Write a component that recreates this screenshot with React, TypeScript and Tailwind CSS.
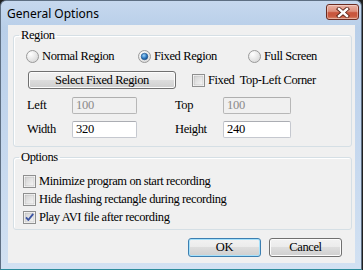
import React from "react";

const serif = { fontFamily: '"Liberation Serif", "Times New Roman", serif' };

function Radio({ checked }: { checked?: boolean }) {
  return (
    <svg width="13" height="13" viewBox="0 0 13 13" className="shrink-0">
      <defs>
        <radialGradient id={checked ? "rg1" : "rg0"} cx="0.35" cy="0.3" r="0.8">
          <stop offset="0" stopColor="#ffffff" />
          <stop offset="1" stopColor="#d6d6d6" />
        </radialGradient>
        <radialGradient id="dot" cx="0.4" cy="0.35" r="0.7">
          <stop offset="0" stopColor="#9fd4f8" />
          <stop offset="0.6" stopColor="#2b77c0" />
          <stop offset="1" stopColor="#14457c" />
        </radialGradient>
      </defs>
      <circle cx="6.5" cy="6.5" r="6" fill={`url(#${checked ? "rg1" : "rg0"})`} stroke="#9a9a9a" strokeWidth="1" />
      {checked && <circle cx="6.5" cy="6.5" r="3.3" fill="url(#dot)" stroke="#1c4f86" strokeWidth="0.6" />}
    </svg>
  );
}

function Check({ checked }: { checked?: boolean }) {
  return (
    <svg width="13" height="13" viewBox="0 0 13 13" className="shrink-0">
      <defs>
        <linearGradient id="cbg" x1="0" y1="0" x2="1" y2="1">
          <stop offset="0" stopColor="#d2d2d2" />
          <stop offset="1" stopColor="#f6f6f6" />
        </linearGradient>
      </defs>
      <rect x="0.5" y="0.5" width="12" height="12" fill="#ffffff" stroke="#8e8f8f" />
      <rect x="2" y="2" width="9" height="9" fill="url(#cbg)" stroke="#b0b0b0" strokeWidth="0.5" />
      {checked && (
        <path d="M3 6.3 L5.3 9 L10.2 2.8" fill="none" stroke="#3c55a3" strokeWidth="1.9" strokeLinejoin="round" />
      )}
    </svg>
  );
}

function Btn({ children, w, def }: { children: React.ReactNode; w: string; def?: boolean }) {
  return (
    <div
      className={`${w} h-full rounded-[3px] border ${def ? "border-[#3c7fb1] shadow-[inset_0_0_0_1px_#a6e1fb]" : "border-[#707070] shadow-[inset_0_0_0_1px_#fcfcfc]"} bg-[linear-gradient(to_bottom,#f2f2f2_0%,#ebebeb_50%,#dddddd_50%,#cfcfcf_100%)] flex items-center justify-center text-[12.5px] leading-none text-black tracking-[-0.4px]`}
      style={serif}
    >
      {children}
    </div>
  );
}

function Field({ value, disabled, w }: { value: string; disabled?: boolean; w: string }) {
  return (
    <div
      className={`${w} h-full rounded-[2px] border ${disabled ? "bg-[#f0f0f0] text-[#8a8a8a] border-[#b7b7b7] border-t-[#afafaf]" : "bg-white text-black border-[#c5c8cf] border-t-[#abadb3]"} pl-[3px] flex items-center text-[12.5px] leading-none tracking-[-0.2px]`}
      style={serif}
    >
      {value}
    </div>
  );
}

export default function App() {
  return (
    <div className="w-[363px] h-[270px] bg-[#202020] overflow-hidden">
      <div className="w-[362px] h-[270px] rounded-t-[6px] border border-[#5e6f83] border-b-[#2b8c9c] bg-[linear-gradient(to_bottom,#c6d8ee_0%,#b9cfe9_10%,#c4d7ee_50%,#d2e1f2_100%)] flex flex-col">
        <div className="h-[24px] flex items-start justify-between pl-[6px] pr-[2px] shrink-0">
          <span
            className="mt-[5px] text-[12px] leading-[15px] text-black"
            style={{ fontFamily: '"Noto Sans", "Open Sans", sans-serif' }}
          >
            General Options
          </span>
          <div className="mt-[3px] w-[33px] h-[16px] rounded-[3px] border border-[#6b2b20] bg-[linear-gradient(to_bottom,#eab2a4_0%,#dd8f7c_45%,#c8553d_55%,#c9593f_80%,#dc8a6f_100%)] flex items-center justify-center shadow-[inset_0_0_0_1px_rgba(255,255,255,0.35)]">
            <svg width="14" height="11" viewBox="0 0 14 11">
              <path d="M3 2 L11 9 M11 2 L3 9" stroke="#5a2418" strokeWidth="4.2" strokeLinecap="square" />
              <path d="M3 2 L11 9 M11 2 L3 9" stroke="#ffffff" strokeWidth="2.4" strokeLinecap="square" />
            </svg>
          </div>
        </div>

        <div className="ml-[7px] mr-[6px] mb-[6px] flex-1 bg-[#f0f0f0] flex flex-col text-black" style={serif}>
          <fieldset className="ml-[5px] mr-[3px] mt-[3px] border border-[#d5dfe5] rounded-[3px] pb-[8px] shadow-[inset_1px_1px_0_#ffffff]">
            <legend className="ml-[5px] px-[2px] text-[12.5px] leading-[14px] tracking-[-0.4px]" style={serif}>Region</legend>
            <div className="mt-[7px] h-[14px] flex items-center pl-[12px] text-[12.5px] tracking-[-0.4px]">
              <div className="w-[112px] flex items-center gap-[3px]">
                <Radio />
                <span className="leading-none">Normal Region</span>
              </div>
              <div className="w-[110px] flex items-center gap-[3px]">
                <Radio checked />
                <span className="leading-none">Fixed Region</span>
              </div>
              <div className="flex items-center gap-[3px]">
                <Radio />
                <span className="leading-none">Full Screen</span>
              </div>
            </div>
            <div className="mt-[8px] h-[18px] flex items-center pl-[14px]">
              <Btn w="w-[148px]">Select Fixed Region</Btn>
              <div className="ml-[16px] flex items-center gap-[3px] text-[12.5px] tracking-[-0.4px]">
                <Check />
                <span className="leading-none">Fixed&nbsp; Top-Left Corner</span>
              </div>
            </div>
            <div className="mt-[8px] h-[17px] flex items-center pl-[13px] text-[12.5px] tracking-[-0.4px]">
              <span className="w-[45px] leading-none">Left</span>
              <Field w="w-[65px]" value="100" disabled />
              <span className="ml-[38px] w-[48px] leading-none">Top</span>
              <Field w="w-[68px]" value="100" disabled />
            </div>
            <div className="mt-[7px] h-[17px] flex items-center pl-[13px] text-[12.5px] tracking-[-0.4px]">
              <span className="w-[45px] leading-none">Width</span>
              <Field w="w-[65px]" value="320" />
              <span className="ml-[38px] w-[48px] leading-none">Height</span>
              <Field w="w-[68px]" value="240" />
            </div>
          </fieldset>

          <fieldset className="ml-[5px] mr-[3px] mt-[3px] border border-[#d5dfe5] rounded-[3px] pb-[5px] shadow-[inset_1px_1px_0_#ffffff]">
            <legend className="ml-[5px] px-[2px] text-[12.5px] leading-[14px] tracking-[-0.4px]" style={serif}>Options</legend>
            <div className="mt-[10px] flex flex-col gap-[4px] pl-[9px] text-[12.5px] tracking-[-0.4px]">
              <div className="h-[14px] flex items-center gap-[3px]">
                <Check />
                <span className="leading-none">Minimize program on start recording</span>
              </div>
              <div className="h-[14px] flex items-center gap-[3px]">
                <Check />
                <span className="leading-none">Hide flashing rectangle during recording</span>
              </div>
              <div className="h-[14px] flex items-center gap-[3px]">
                <Check checked />
                <span className="leading-none">Play AVI file after recording</span>
              </div>
            </div>
          </fieldset>

          <div className="mt-[8px] h-[19px] flex justify-end gap-[8px] mr-[13px]">
            <Btn w="w-[73px]" def>OK</Btn>
            <Btn w="w-[73px]">Cancel</Btn>
          </div>
        </div>
      </div>
    </div>
  );
}
